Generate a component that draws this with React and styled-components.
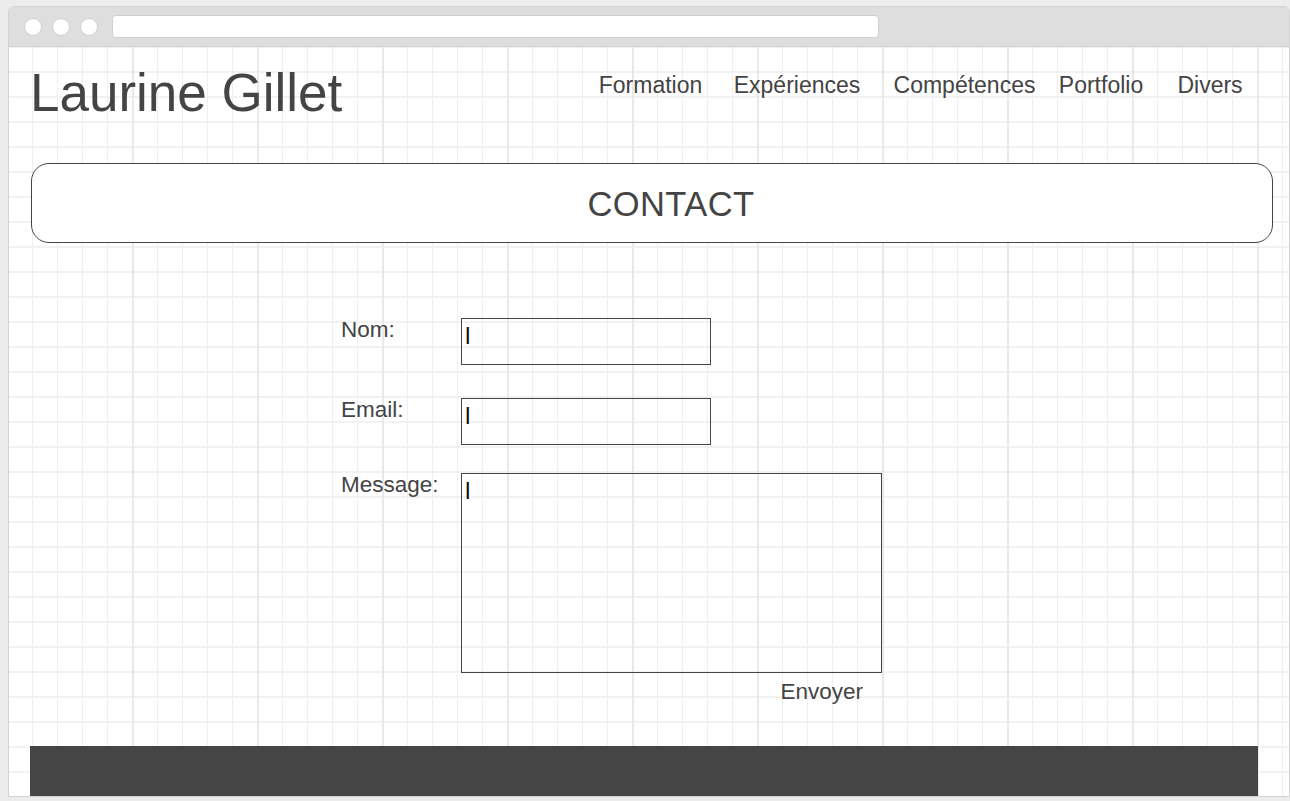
import styled, { createGlobalStyle } from "styled-components";

const GlobalStyle = createGlobalStyle`
    body {
        margin: 0;
        background: #ececec;
        font-family: "Liberation Sans", Arial, sans-serif;
        color: #444444;
    }
`

const Page = styled.div`
    width: 1290px;
    height: 801px;
    padding: 6px 0 0 8px;
    box-sizing: border-box;
`

const BrowserWindow = styled.div`
    width: 1280px;
    border: 1px solid #d2d2d2;
    border-radius: 6px 6px 0 0;
    overflow: hidden;
    background: #ffffff;
`

const TitleBar = styled.div`
    height: 39px;
    display: flex;
    align-items: center;
    padding-left: 15px;
    background: #dedede;
    border-bottom: 1px solid #d2d2d2;
`

const Dot = styled.span`
    width: 16px;
    height: 16px;
    border-radius: 50%;
    background: #ffffff;
    border: 1px solid #d0d0d0;
    margin-right: 10px;
`

const UrlBar = styled.div`
    width: 765px;
    height: 21px;
    margin-left: 4px;
    background: #ffffff;
    border: 1px solid #d0d0d0;
    border-radius: 4px;
`

const Canvas = styled.div`
    height: 749px;
    display: flex;
    flex-direction: column;
    background-color: #ffffff;
    background-image:
        linear-gradient(to right, #e9e9e9 0 2px, transparent 2px),
        linear-gradient(to right, #efefef 0 1px, transparent 1px),
        linear-gradient(to bottom, #f2f2f2 0 2px, transparent 2px);
    background-size: 125px 100%, 25px 100%, 100% 25px;
    background-position: 123px 0, 23px 0, 0 24px;
`

const Header = styled.header`
    display: flex;
    align-items: flex-start;
    padding: 19px 20px 0 21px;
`

const Title = styled.h1`
    margin: 0;
    font-size: 53px;
    line-height: 53px;
    font-weight: normal;
    color: #444444;
`

const Nav = styled.nav`
    display: flex;
    margin: 8px 0 0 auto;
`

const NavLink = styled.a`
    width: ${p => p.$w}px;
    text-align: center;
    font-size: 23px;
    line-height: 23px;
    color: #444444;
    text-decoration: none;
    white-space: nowrap;
`

const Banner = styled.div`
    width: 1242px;
    height: 80px;
    box-sizing: border-box;
    margin: 44px 0 0 22px;
    display: flex;
    align-items: center;
    justify-content: center;
    padding: 2px 0 0 38px;
    border: 1px solid #444444;
    border-radius: 18px;
    background: #ffffff;
    font-size: 34.5px;
    line-height: 34.5px;
    letter-spacing: 0.4px;
`

const Form = styled.form`
    width: 541px;
    margin: 75px 0 0 332px;
    display: flex;
    flex-direction: column;
`

const Row = styled.div`
    display: flex;
    align-items: flex-start;
    margin-bottom: ${p => p.$gap || 0}px;
`

const Label = styled.label`
    width: 120px;
    margin-left: -1px;
    padding: 1px 0 0 1px;
    font-size: 22.5px;
    line-height: 22.5px;
`

const Field = styled.div`
    width: ${p => p.$w}px;
    height: ${p => p.$h}px;
    box-sizing: border-box;
    padding: 5px 0 0 3px;
    border: 1px solid #444444;
    font-size: 19px;
    line-height: 19px;
    color: #111111;
    text-shadow: 0.5px 0 0 #111111;
`

const SendButton = styled.button`
    align-self: flex-end;
    margin: 8px 19px 0 0;
    padding: 0;
    border: none;
    background: none;
    font-family: inherit;
    font-size: 22.5px;
    line-height: 22.5px;
    color: #444444;
    cursor: pointer;
`

const Footer = styled.footer`
    width: 1228px;
    height: 50px;
    margin: auto 0 0 21px;
    background: #454545;
`

const links = [
    { label: "Formation", w: 131 },
    { label: "Expériences", w: 162 },
    { label: "Compétences", w: 173 },
    { label: "Portfolio", w: 100 },
    { label: "Divers", w: 118 },
]

function App() {
    return (
        <Page>
            <GlobalStyle />
            <BrowserWindow>
                <TitleBar>
                    <Dot />
                    <Dot />
                    <Dot />
                    <UrlBar />
                </TitleBar>
                <Canvas>
                    <Header>
                        <Title>Laurine Gillet</Title>
                        <Nav>
                            {links.map(link =>
                                <NavLink key={link.label} $w={link.w}>{link.label}</NavLink>)}
                        </Nav>
                    </Header>

                    <Banner>CONTACT</Banner>

                    <Form onSubmit={e => e.preventDefault()}>
                        <Row $gap={33}>
                            <Label>Nom:</Label>
                            <Field $w={250} $h={47}>|</Field>
                        </Row>
                        <Row $gap={28}>
                            <Label>Email:</Label>
                            <Field $w={250} $h={47}>|</Field>
                        </Row>
                        <Row>
                            <Label>Message:</Label>
                            <Field $w={421} $h={200}>|</Field>
                        </Row>
                        <SendButton type="submit">Envoyer</SendButton>
                    </Form>

                    <Footer />
                </Canvas>
            </BrowserWindow>
        </Page>
    )
}

export default App;
